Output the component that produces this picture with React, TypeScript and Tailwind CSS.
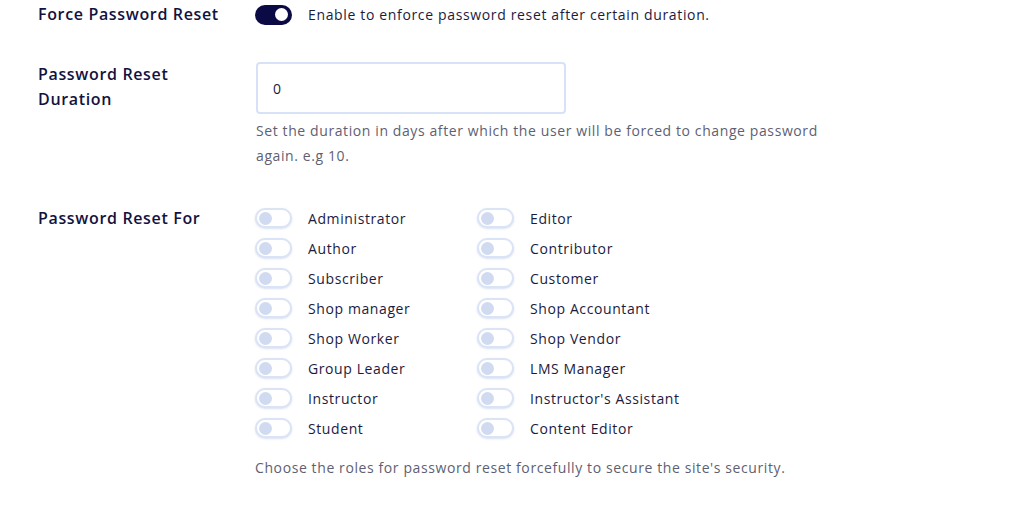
import React from "react";

const roles: [string, string][] = [
  ["Administrator", "Editor"],
  ["Author", "Contributor"],
  ["Subscriber", "Customer"],
  ["Shop manager", "Shop Accountant"],
  ["Shop Worker", "Shop Vendor"],
  ["Group Leader", "LMS Manager"],
  ["Instructor", "Instructor's Assistant"],
  ["Student", "Content Editor"],
];

function OffToggle() {
  return (
    <div className="w-[37px] h-[20px] rounded-full border-2 border-[#dbe3f6] bg-white flex items-center pl-[2px] shadow-[0_1px_2px_rgba(180,195,230,0.5)]">
      <div className="w-[13px] h-[13px] rounded-full bg-[#d0dbf1]" />
    </div>
  );
}

function RoleItem({ name }: { name: string }) {
  return (
    <div className="flex items-center h-[30px] w-[222px]">
      <OffToggle />
      <span className="ml-[16px] text-[14px] tracking-[0.6px] text-[#1c1b3e]">{name}</span>
    </div>
  );
}

export default function App() {
  return (
    <div
      className="w-full h-[507px] bg-white pl-[38px] pt-[2px]"
      style={{ fontFamily: '"Open Sans", "Liberation Sans", sans-serif' }}
    >
      <div className="flex items-center h-[25px]">
        <div className="w-[217px] text-[16px] font-semibold tracking-[0.65px] text-[#13123f] leading-[25px]">Force Password Reset</div>
        <div className="w-[37px] h-[20px] rounded-full bg-[#0c0a45] flex items-center justify-end pr-[4px]">
          <div className="w-[13px] h-[13px] rounded-full bg-white" />
        </div>
        <span className="ml-[16px] text-[14px] tracking-[0.65px] text-[#1c1b3e]">Enable to enforce password reset after certain duration.</span>
      </div>

      <div className="flex items-start mt-[35px]">
        <div className="w-[218px] text-[16px] font-semibold tracking-[0.65px] text-[#13123f] leading-[25px] pr-[40px]">Password Reset Duration</div>
        <div className="flex flex-col">
          <div className="w-[310px] h-[52px] rounded-[4px] border-2 border-[#d8e2f6] flex items-center px-[15px] text-[14px] text-[#1c1b3e]">0</div>
          <p className="mt-[4px] w-[580px] text-[14px] tracking-[0.6px] leading-[25px] text-[#5e5f73]">
            Set the duration in days after which the user will be forced to change password again. e.g 10.
          </p>
        </div>
      </div>

      <div className="flex items-start mt-[35px]">
        <div className="w-[217px] text-[16px] font-semibold tracking-[0.65px] text-[#13123f] leading-[30px]">Password Reset For</div>
        <div className="flex flex-col">
          {roles.map(([a, b]) => (
            <div key={a} className="flex">
              <RoleItem name={a} />
              <RoleItem name={b} />
            </div>
          ))}
          <p className="mt-[12px] text-[14px] tracking-[0.6px] leading-[25px] text-[#5e5f73]">
            Choose the roles for password reset forcefully to secure the site's security.
          </p>
        </div>
      </div>
    </div>
  );
}
